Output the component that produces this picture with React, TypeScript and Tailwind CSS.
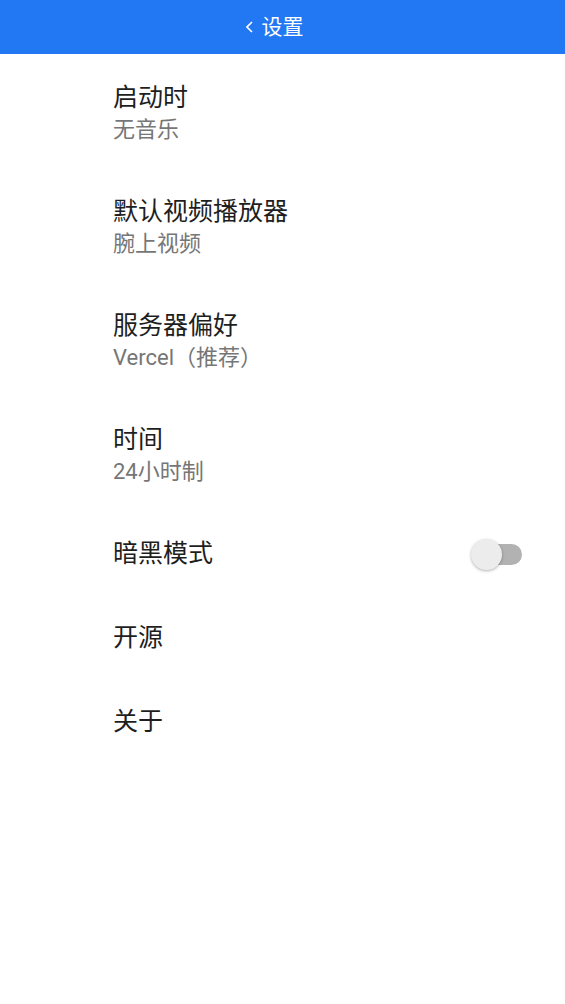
const font = { fontFamily: 'Roboto, "Noto Sans CJK SC", sans-serif' };

interface Item {
  title: string;
  subtitle?: string;
  toggle?: boolean;
}

const items: Item[] = [
  { title: "启动时", subtitle: "无音乐" },
  { title: "默认视频播放器", subtitle: "腕上视频" },
  { title: "服务器偏好", subtitle: "Vercel（推荐）" },
  { title: "时间", subtitle: "24小时制" },
  { title: "暗黑模式", toggle: true },
  { title: "开源" },
  { title: "关于" },
];

function Toggle() {
  return (
    <div className="relative h-[31px] w-[51px]">
      <div className="absolute left-[3px] top-[5px] h-[21px] w-[48px] rounded-full bg-[#b2b2b2]" />
      <div className="absolute left-0 top-0 h-[31px] w-[31px] rounded-full bg-[#ececec] shadow-[0_1px_3px_rgba(0,0,0,0.3)]" />
    </div>
  );
}

export default function App() {
  return (
    <div className="min-h-[1004px] w-[565px] bg-white" style={font}>
      <header className="relative flex h-[54px] items-center justify-center bg-[#2277f2]">
        <div className="relative flex items-center">
          <svg
            className="absolute -left-[16px] top-1/2 -translate-y-1/2"
            width="7"
            height="12"
            viewBox="0 0 7 12"
            fill="none"
          >
            <path d="M6 1L1 6l5 5" stroke="white" strokeWidth="1.6" />
          </svg>
          <span className="text-[21px] leading-none text-white">设置</span>
        </div>
      </header>
      <div className="pt-[2px]">
        {items.map((item) =>
          item.subtitle ? (
            <div key={item.title} className="flex h-[114px] flex-col justify-center pl-[113px] pr-[43px]">
              <div className="text-[25px] leading-[34px] text-[#1e1e1e]">{item.title}</div>
              <div className="text-[22px] leading-[30px] text-[#767676]">{item.subtitle}</div>
            </div>
          ) : (
            <div key={item.title} className="flex h-[84px] items-center justify-between pl-[113px] pr-[43px]">
              <div className="text-[25px] leading-[34px] text-[#1e1e1e]">{item.title}</div>
              {item.toggle && <Toggle />}
            </div>
          )
        )}
      </div>
    </div>
  );
}
